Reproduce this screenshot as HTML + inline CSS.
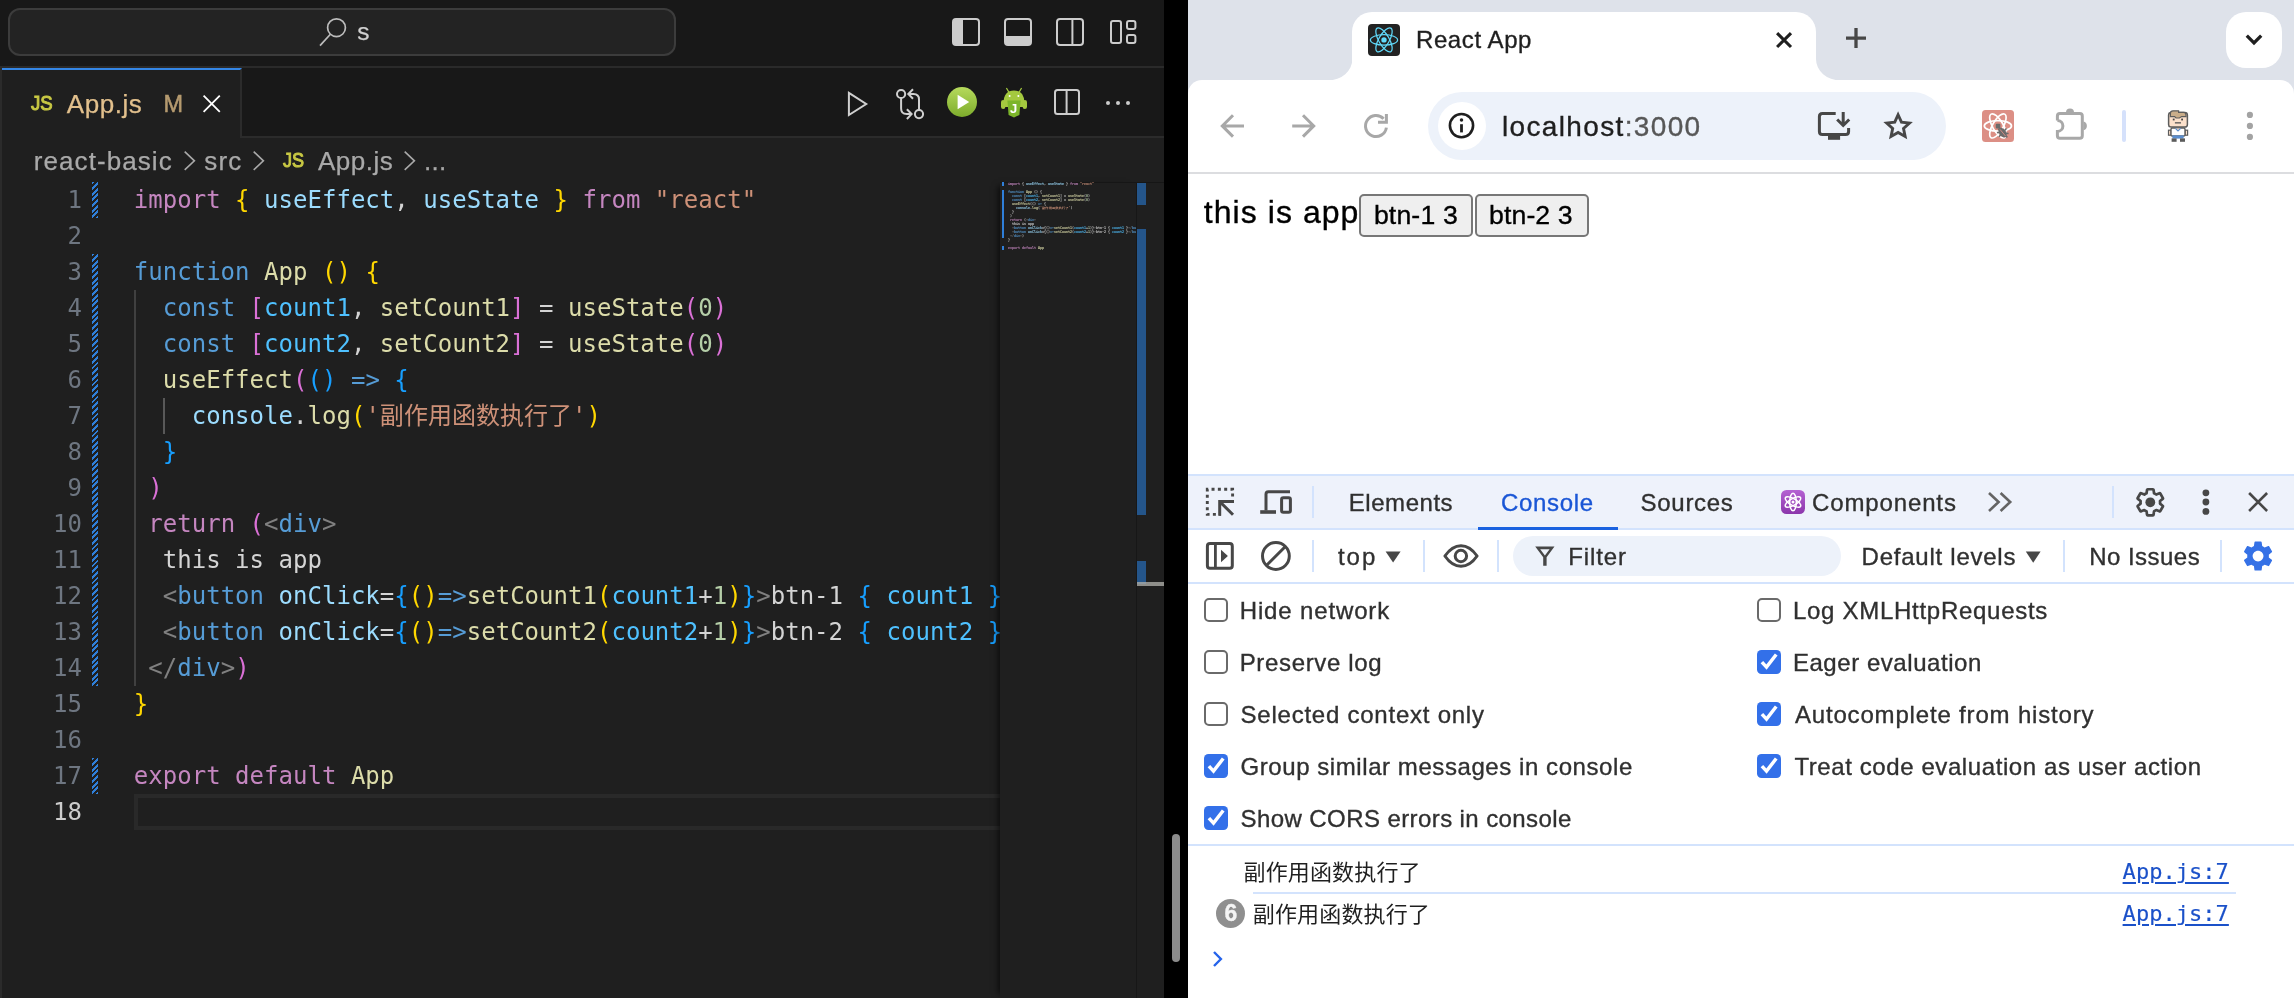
<!DOCTYPE html>
<html lang="en">
<head>
<meta charset="utf-8">
<title>React App</title>
<style>
*{box-sizing:border-box;margin:0;padding:0}
html,body{width:2294px;height:998px;overflow:hidden;background:#000}
body{position:relative;font-family:"Liberation Sans","Noto Sans CJK SC",sans-serif}
#vsc,#chr{will-change:transform}
.abs{position:absolute}
.tx{position:absolute;white-space:pre}
#chr .tx{-webkit-text-stroke:.35px}
#vsc .tx{-webkit-text-stroke:.25px}
svg{display:block;overflow:visible}

/* ============ VS CODE ============ */
#vsc{position:absolute;left:0;top:0;width:1164px;height:998px;background:#1f1f1f;overflow:hidden}
#vsc .title{position:absolute;left:0;top:0;width:1164px;height:68px;background:#181818;border-bottom:2px solid #2a2a2a}
#vsc .search{position:absolute;left:8px;top:8px;width:668px;height:48px;background:#232323;border:2px solid #3c3c3c;border-radius:12px}
#vsc .search span{position:absolute;left:347px;top:6px;font-size:26px;color:#cccccc;line-height:32px}
#vsc .tabs{position:absolute;left:0;top:68px;width:1164px;height:70px;background:#181818;border-bottom:2px solid #2b2b2b}
#vsc .tab{position:absolute;left:2px;top:0;width:240px;height:70px;background:#1f1f1f;border-top:2px solid #3486e5;border-right:2px solid #2b2b2b}
#vsc .leftedge{position:absolute;left:0;top:66px;width:2px;height:932px;background:#2b2b2b}
.jsicon{font-weight:bold;color:#cbcb41;font-size:19px;letter-spacing:-0.5px}
#vsc .crumbs{position:absolute;left:0;top:138px;height:44px;width:1000px;font-size:26px;color:#a9a9a9;line-height:44px;white-space:nowrap}
#vsc .crumbs span{position:absolute;top:0}

/* code */
#code{position:absolute;left:0;top:182px;width:1000px;height:816px;overflow:hidden;font-family:"DejaVu Sans Mono","Liberation Mono","Noto Sans CJK SC",monospace;font-size:24px;line-height:36px;color:#d4d4d4;white-space:pre}
#code .ln{position:absolute;left:0;width:82px;text-align:right;color:#6e7681;height:36px}
#code .ln.act{color:#cccccc}
#code .l{position:absolute;left:133.8px;height:36px;letter-spacing:.02px}
.kw{color:#c586c0}.kb{color:#569cd6}.v{color:#9cdcfe}.f{color:#dcdcaa}.s{color:#ce9178}.n{color:#b5cea8}.c{color:#4fc1ff}
.b1{color:#ffd700}.b2{color:#da70d6}.b3{color:#179fff}.t{color:#808080}
.cjk{font-family:"Noto Sans CJK SC",sans-serif;line-height:0}
.gut{position:absolute;left:92px;width:6px;background:repeating-linear-gradient(135deg,#2f7fd9 0 2px,transparent 2px 4px)}
.guide{position:absolute;width:2px;background:#404040}
#curline{position:absolute;left:134px;top:612px;width:890px;height:36px;border:4px solid #292929}

/* minimap */
#mini{position:absolute;left:1000px;top:182px;width:136px;height:816px;background:#1f1f1f;overflow:hidden;box-shadow:-6px 0 6px -4px rgba(0,0,0,.6)}
#ruler{position:absolute;left:1136px;top:182px;width:28px;height:816px;background:#1f1f1f;border-left:1px solid #171717}
#minitext{position:absolute;left:8px;top:0;transform-origin:0 0;transform:scale(0.1384,0.1111);font-family:"DejaVu Sans Mono","Liberation Mono","Noto Sans CJK SC",monospace;font-size:24px;line-height:36px;color:#d4d4d4;font-weight:bold;opacity:.9}
#minitext .ml{height:36px;white-space:pre}
</style>
</head>

<body>


<!-- ================= VS CODE ================= -->
<div id="vsc">
  <div class="title">
    <div class="search"></div>
  </div>

  <!-- title bar layout icons -->
  <svg class="abs" style="left:952px;top:18px" width="28" height="28" viewBox="0 0 28 28"><rect x="1" y="1" width="26" height="26" rx="3" fill="none" stroke="#cccccc" stroke-width="2"/><path d="M1 4 Q1 1 4 1 H11 V27 H4 Q1 27 1 24 Z" fill="#cccccc"/></svg>
  <svg class="abs" style="left:1004px;top:18px" width="28" height="28" viewBox="0 0 28 28"><rect x="1" y="1" width="26" height="26" rx="3" fill="none" stroke="#cccccc" stroke-width="2"/><path d="M1 18 H27 V24 Q27 27 24 27 H4 Q1 27 1 24 Z" fill="#cccccc"/></svg>
  <svg class="abs" style="left:1056px;top:18px" width="28" height="28" viewBox="0 0 28 28"><rect x="1" y="1" width="26" height="26" rx="3" fill="none" stroke="#cccccc" stroke-width="2"/><path d="M16.4 1 V27" stroke="#cccccc" stroke-width="2"/></svg>
  <svg class="abs" style="left:1110px;top:20px" width="27" height="24" viewBox="0 0 27 24"><rect x="1" y="1" width="10" height="22" rx="2" fill="none" stroke="#cccccc" stroke-width="2"/><rect x="17" y="1" width="8.4" height="8" rx="2" fill="none" stroke="#cccccc" stroke-width="2"/><rect x="17" y="15" width="8.4" height="8" rx="2" fill="none" stroke="#cccccc" stroke-width="2"/></svg>
  <div class="tabs">
    <div class="tab"></div>
  </div>

  <!-- editor actions -->
  <svg class="abs" style="left:846px;top:88px" width="24" height="32" viewBox="0 0 24 32"><path d="M2.9 4.9 L20.2 16 L2.9 27 Z" fill="none" stroke="#d0d0d0" stroke-width="2" stroke-linejoin="miter"/></svg>
  <svg class="abs" style="left:895px;top:88px" width="30" height="32" viewBox="0 0 30 32"><circle cx="6.1" cy="6" r="4.1" fill="none" stroke="#d0d0d0" stroke-width="2"/><circle cx="24" cy="26.1" r="4.1" fill="none" stroke="#d0d0d0" stroke-width="2"/><path d="M6.1 10.1 V20.6 Q6.1 26.1 11.6 26.1 H16 M11.9 21.2 L16.6 26.1 L11.9 31" fill="none" stroke="#d0d0d0" stroke-width="2"/><path d="M24 22 V11.5 Q24 6 18.5 6 H14 M18 1.3 L13.3 6 L18 10.8" fill="none" stroke="#d0d0d0" stroke-width="2"/></svg>
  <div class="abs" style="left:946.8px;top:87px;width:30px;height:30px;border-radius:15px;background:linear-gradient(#b6da5c,#7dac2c)"></div><svg class="abs" style="left:946px;top:86px" width="32" height="32" viewBox="0 0 32 32"><path d="M11.6 8.8 L23.2 16 L11.6 23.2 Z" fill="#ffffff"/></svg>
  <svg class="abs" style="left:1000px;top:86px" width="28" height="34" viewBox="0 0 28 34"><path d="M6.4 2 L9 6.4 M21.6 2 L19 6.4" stroke="#a4c93f" stroke-width="1.2"/><path d="M3.6 17 Q3.6 4.4 14 4.4 Q24.4 4.4 24.4 17 V21 H3.6 Z" fill="#a4c93f"/><rect x="1" y="14" width="4.4" height="9" rx="2.2" fill="#a4c93f"/><rect x="22.6" y="14" width="4.4" height="9" rx="2.2" fill="#a4c93f"/><circle cx="9.6" cy="10" r="1" fill="#fff"/><circle cx="18.4" cy="10" r="1" fill="#fff"/><path d="M7.4 14.6 H20.6 L19.4 29 L14 31.4 L8.6 29 Z" fill="#7cb52a"/><text x="10" y="27" font-family="Liberation Sans,sans-serif" font-weight="bold" font-size="13" fill="#ffffff">J</text></svg>
  <svg class="abs" style="left:1054px;top:89px" width="26" height="26" viewBox="0 0 26 26"><rect x="1" y="1" width="24" height="24" rx="2.5" fill="none" stroke="#cccccc" stroke-width="2"/><path d="M12.6 1 V25" stroke="#cccccc" stroke-width="2"/></svg>
  <div class="abs" style="left:1105.6px;top:100.8px;width:4.6px;height:4.6px;border-radius:3px;background:#cccccc"></div>
  <div class="abs" style="left:1115.7px;top:100.8px;width:4.6px;height:4.6px;border-radius:3px;background:#cccccc"></div>
  <div class="abs" style="left:1125.8px;top:100.8px;width:4.6px;height:4.6px;border-radius:3px;background:#cccccc"></div>
  <div class="leftedge"></div>
  <svg class="abs" style="left:318px;top:16px" width="30" height="32" viewBox="0 0 30 32"><circle cx="18.5" cy="11.7" r="8.9" fill="none" stroke="#bdbdbd" stroke-width="1.7"/><path d="M12.4 18.2 L2 29.6" stroke="#bdbdbd" stroke-width="1.7" fill="none"/></svg>
<span class="tx" style="left:357.2px;top:20.3px;font-size:24.5px;line-height:24.5px;letter-spacing:0.00px;color:#d0d0d0;">s</span>
<span class="tx" style="left:30.9px;top:92.3px;font-size:21px;line-height:21px;letter-spacing:0.00px;color:#c9c944;-webkit-text-stroke:1px;transform:scaleX(0.885);transform-origin:0 0;">JS</span>
<span class="tx" style="left:66.8px;top:90.6px;font-size:26px;line-height:26px;letter-spacing:0.53px;color:#e2c08d;">App.js</span>
<span class="tx" style="left:163.4px;top:92.6px;font-size:23.5px;line-height:23.5px;letter-spacing:0.00px;color:#b59a6f;-webkit-text-stroke:.5px;">M</span>
<svg class="abs" style="left:203.3px;top:94.5px" width="17.4" height="17.4" viewBox="0 0 17.4 17.4"><path d="M0.6 0.6 L16.8 16.8 M16.8 0.6 L0.6 16.8" stroke="#ffffff" stroke-width="1.8" fill="none"/></svg>
<span class="tx" style="left:33.8px;top:148.1px;font-size:26px;line-height:26px;letter-spacing:1.07px;color:#a9a9a9;">react-basic</span>
<svg class="abs" style="left:183.6px;top:150.5px" width="11.4" height="19.6" viewBox="0 0 11.4 19.6"><path d="M0.7 0.7 L10.4 9.8 L0.7 18.9" fill="none" stroke="#a9a9a9" stroke-width="1.6"/></svg>
<span class="tx" style="left:204.3px;top:148.1px;font-size:26px;line-height:26px;letter-spacing:1.18px;color:#a9a9a9;">src</span>
<svg class="abs" style="left:253px;top:150.5px" width="11.4" height="19.6" viewBox="0 0 11.4 19.6"><path d="M0.7 0.7 L10.4 9.8 L0.7 18.9" fill="none" stroke="#a9a9a9" stroke-width="1.6"/></svg>
<span class="tx" style="left:282.6px;top:149.3px;font-size:21px;line-height:21px;letter-spacing:0.00px;color:#c9c944;-webkit-text-stroke:1px;transform:scaleX(0.859);transform-origin:0 0;">JS</span>
<span class="tx" style="left:317.9px;top:148.1px;font-size:26px;line-height:26px;letter-spacing:0.53px;color:#a9a9a9;">App.js</span>
<svg class="abs" style="left:404.4px;top:150.5px" width="11.4" height="19.6" viewBox="0 0 11.4 19.6"><path d="M0.7 0.7 L10.4 9.8 L0.7 18.9" fill="none" stroke="#a9a9a9" stroke-width="1.6"/></svg>
<span class="tx" style="left:424.1px;top:148.1px;font-size:26px;line-height:26px;letter-spacing:0.29px;color:#a9a9a9;">...</span>
  <div id="code">
<div class="gut" style="top:0px;height:36px"></div>
<div class="gut" style="top:72px;height:432px"></div>
<div class="gut" style="top:576px;height:36px"></div>
<div class="guide" style="left:134px;top:108px;height:396px"></div>
<div class="guide" style="left:163px;background:#585858;top:216px;height:36px"></div>
<div id="curline"></div>
<div class="ln" style="top:0px">1</div>
<div class="l" style="top:0px"><span class="kw">import</span> <span class="b1">{</span> <span class="v">useEffect</span>, <span class="v">useState</span> <span class="b1">}</span> <span class="kw">from</span> <span class="s">"react"</span></div>
<div class="ln" style="top:36px">2</div>
<div class="ln" style="top:72px">3</div>
<div class="l" style="top:72px"><span class="kb">function</span> <span class="f">App</span> <span class="b1">()</span> <span class="b1">{</span></div>
<div class="ln" style="top:108px">4</div>
<div class="l" style="top:108px">  <span class="kb">const</span> <span class="b2">[</span><span class="c">count1</span>, <span class="f">setCount1</span><span class="b2">]</span> = <span class="f">useState</span><span class="b2">(</span><span class="n">0</span><span class="b2">)</span></div>
<div class="ln" style="top:144px">5</div>
<div class="l" style="top:144px">  <span class="kb">const</span> <span class="b2">[</span><span class="c">count2</span>, <span class="f">setCount2</span><span class="b2">]</span> = <span class="f">useState</span><span class="b2">(</span><span class="n">0</span><span class="b2">)</span></div>
<div class="ln" style="top:180px">6</div>
<div class="l" style="top:180px">  <span class="f">useEffect</span><span class="b2">(</span><span class="b3">()</span> <span class="kb">=&gt;</span> <span class="b3">{</span></div>
<div class="ln" style="top:216px">7</div>
<div class="l" style="top:216px">    <span class="v">console</span>.<span class="f">log</span><span class="b1">(</span><span class="s">'</span><span class="s cjk">副作用函数执行了</span><span class="s">'</span><span class="b1">)</span></div>
<div class="ln" style="top:252px">8</div>
<div class="l" style="top:252px">  <span class="b3">}</span></div>
<div class="ln" style="top:288px">9</div>
<div class="l" style="top:288px"> <span class="b2">)</span></div>
<div class="ln" style="top:324px">10</div>
<div class="l" style="top:324px"> <span class="kw">return</span> <span class="b2">(</span><span class="t">&lt;</span><span class="kb">div</span><span class="t">&gt;</span></div>
<div class="ln" style="top:360px">11</div>
<div class="l" style="top:360px">  this is app</div>
<div class="ln" style="top:396px">12</div>
<div class="l" style="top:396px">  <span class="t">&lt;</span><span class="kb">button</span> <span class="v">onClick</span>=<span class="b3">{</span><span class="b1">()</span><span class="kb">=&gt;</span><span class="f">setCount1</span><span class="b1">(</span><span class="c">count1</span>+<span class="n">1</span><span class="b1">)</span><span class="b3">}</span><span class="t">&gt;</span>btn-1 <span class="b3">{</span> <span class="c">count1</span> <span class="b3">}</span><span class="t">&lt;/</span><span class="kb">button</span><span class="t">&gt;</span></div>
<div class="ln" style="top:432px">13</div>
<div class="l" style="top:432px">  <span class="t">&lt;</span><span class="kb">button</span> <span class="v">onClick</span>=<span class="b3">{</span><span class="b1">()</span><span class="kb">=&gt;</span><span class="f">setCount2</span><span class="b1">(</span><span class="c">count2</span>+<span class="n">1</span><span class="b1">)</span><span class="b3">}</span><span class="t">&gt;</span>btn-2 <span class="b3">{</span> <span class="c">count2</span> <span class="b3">}</span><span class="t">&lt;/</span><span class="kb">button</span><span class="t">&gt;</span></div>
<div class="ln" style="top:468px">14</div>
<div class="l" style="top:468px"> <span class="t">&lt;/</span><span class="kb">div</span><span class="t">&gt;</span><span class="b2">)</span></div>
<div class="ln" style="top:504px">15</div>
<div class="l" style="top:504px"><span class="b1">}</span></div>
<div class="ln" style="top:540px">16</div>
<div class="ln" style="top:576px">17</div>
<div class="l" style="top:576px"><span class="kw">export</span> <span class="kw">default</span> <span class="f">App</span></div>
<div class="ln act" style="top:612px">18</div>
</div>
  <div id="mini"><div class="abs" style="left:0;top:0;width:136px;height:1px;background:#161616"></div><div class="abs" style="left:1.8px;top:0;width:2.4px;height:4px;background:#2f7fd9"></div><div class="abs" style="left:1.8px;top:8px;width:2.4px;height:48px;background:#2f7fd9"></div><div class="abs" style="left:1.8px;top:64px;width:2.4px;height:4px;background:#2f7fd9"></div><div id="minitext">
<div class="ml"><span class="kw">import</span> { <span class="v">useEffect</span>, <span class="v">useState</span> } <span class="kw">from</span> <span class="s">"react"</span></div>
<div class="ml"> </div>
<div class="ml"><span class="kb">function</span> <span class="f">App</span> () {</div>
<div class="ml">  <span class="kb">const</span> [<span class="c">count1</span>, <span class="f">setCount1</span>] = <span class="f">useState</span>(<span class="n">0</span>)</div>
<div class="ml">  <span class="kb">const</span> [<span class="c">count2</span>, <span class="f">setCount2</span>] = <span class="f">useState</span>(<span class="n">0</span>)</div>
<div class="ml">  <span class="f">useEffect</span>(() <span class="kb">=&gt;</span> {</div>
<div class="ml">    <span class="v">console</span>.<span class="f">log</span>(<span class="s">'</span><span class="s cjk">副作用函数执行了</span><span class="s">'</span>)</div>
<div class="ml">  }</div>
<div class="ml"> )</div>
<div class="ml"> <span class="kw">return</span> (<span class="t">&lt;</span><span class="kb">div</span><span class="t">&gt;</span></div>
<div class="ml">  this is app</div>
<div class="ml">  <span class="t">&lt;</span><span class="kb">button</span> <span class="v">onClick</span>={()<span class="kb">=&gt;</span><span class="f">setCount1</span>(<span class="c">count1</span>+<span class="n">1</span>)}<span class="t">&gt;</span>btn-1 { <span class="c">count1</span> }<span class="t">&lt;/</span><span class="kb">button</span><span class="t">&gt;</span></div>
<div class="ml">  <span class="t">&lt;</span><span class="kb">button</span> <span class="v">onClick</span>={()<span class="kb">=&gt;</span><span class="f">setCount2</span>(<span class="c">count2</span>+<span class="n">1</span>)}<span class="t">&gt;</span>btn-2 { <span class="c">count2</span> }<span class="t">&lt;/</span><span class="kb">button</span><span class="t">&gt;</span></div>
<div class="ml"> <span class="t">&lt;/</span><span class="kb">div</span><span class="t">&gt;</span>)</div>
<div class="ml">}</div>
<div class="ml"> </div>
<div class="ml"><span class="kw">export</span> <span class="kw">default</span> <span class="f">App</span></div>
<div class="ml"> </div>
</div></div>
  <div id="ruler"><div class="abs" style="left:0;top:0;width:28px;height:1px;background:#161616"></div>
    <div class="abs" style="left:0px;top:1px;width:9.4px;height:22px;background:#24558a"></div>
    <div class="abs" style="left:0px;top:47px;width:9.4px;height:286px;background:#24558a"></div>
    <div class="abs" style="left:0px;top:379px;width:9.4px;height:23px;background:#24558a"></div>
    <div class="abs" style="left:0;top:400px;width:28px;height:4px;background:rgba(170,170,165,.8)"></div>
  </div>
</div>
<!-- window scrollbar in black gap -->
<div class="abs" style="left:1172px;top:834px;width:8px;height:128px;border-radius:4px;background:#8c8c8c"></div>

<!-- ================= CHROME ================= -->
<div id="chr" style="position:absolute;left:0;top:0;width:2294px;height:998px">
<div class="abs" style="left:1188px;top:0;width:1106px;height:998px;background:#fff"></div>
<div class="abs" style="left:1188px;top:0;width:1106px;height:96px;background:#dee2ea"></div>
<div class="abs" style="left:1188px;top:80px;width:1106px;height:92px;background:#fff;border-radius:14px 14px 0 0"></div>
<div class="abs" style="left:1188px;top:172px;width:1106px;height:2px;background:#dcdde0"></div>
<div class="abs" style="left:1352px;top:12px;width:464px;height:70px;background:#fff;border-radius:20px 20px 0 0"></div>
<svg class="abs" style="left:1327.6px;top:58.6px" width="24.4" height="21.4" viewBox="0 0 24.4 21.4"><path d="M24.4 0 V21.4 H0 A24.4 21.4 0 0 0 24.4 0Z" fill="#fff"/></svg>
<svg class="abs" style="left:1816px;top:58.6px" width="24.4" height="21.4" viewBox="0 0 24.4 21.4"><path d="M0 0 V21.4 H24.4 A24.4 21.4 0 0 1 0 0Z" fill="#fff"/></svg>
<div class="abs" style="left:1368px;top:24px;width:32px;height:32px;border-radius:4px;background:#222"></div>
<svg class="abs" style="left:1368px;top:24px" width="32" height="32" viewBox="0 0 32 32"><ellipse cx="16" cy="15.9" rx="13.6" ry="5.2" fill="none" stroke="#61dafb" stroke-width="1.25" transform="rotate(0 16 15.9)"/><ellipse cx="16" cy="15.9" rx="13.6" ry="5.2" fill="none" stroke="#61dafb" stroke-width="1.25" transform="rotate(60 16 15.9)"/><ellipse cx="16" cy="15.9" rx="13.6" ry="5.2" fill="none" stroke="#61dafb" stroke-width="1.25" transform="rotate(120 16 15.9)"/><circle cx="16" cy="15.9" r="2.7" fill="#61dafb"/></svg>
<span class="tx" style="left:1416.0px;top:28.1px;font-size:24px;line-height:24px;letter-spacing:0.59px;color:#1f1f1f;">React App</span>
<svg class="abs" style="left:1776px;top:32px" width="16" height="16" viewBox="0 0 16 16"><path d="M1.1 1.1 L15 15 M15 1.1 L1.1 15" stroke="#1f1f1f" stroke-width="3.1" fill="none"/></svg>
<svg class="abs" style="left:1846px;top:28px" width="20" height="20" viewBox="0 0 20 20"><path d="M10 0.1 V20 M0 10.1 H20" stroke="#474747" stroke-width="3.3" fill="none"/></svg>
<div class="abs" style="left:2226px;top:12px;width:56px;height:56px;border-radius:20px;background:#fff"></div>
<svg class="abs" style="left:2244px;top:33px" width="20" height="14" viewBox="0 0 20 14"><path d="M2.8 2.6 L10 9.8 L17.2 2.6" stroke="#1f1f1f" stroke-width="3.3" fill="none"/></svg>
<div class="abs" style="left:1428px;top:92px;width:518px;height:68px;border-radius:34px;background:#edf2fa"></div>
<div class="abs" style="left:1437.5px;top:101.5px;width:48px;height:48px;border-radius:24px;background:#fff"></div>
<span class="tx" style="left:1502.0px;top:113.3px;font-size:28px;line-height:28px;letter-spacing:1.35px;color:#1f1f1f;">localhost<span style="color:#575757">:3000</span></span>
<svg class="abs" style="left:1188px;top:80px" width="1106" height="92" viewBox="1188 80 1106 92"><path d="M1244 125.9 H1222.6 M1233 115.2 L1222.3 125.9 L1233 136.6" fill="none" stroke="#a8a8a8" stroke-width="3"/><path d="M1292.2 125.9 H1313.4 M1303 115.2 L1313.7 125.9 L1303 136.6" fill="none" stroke="#a8a8a8" stroke-width="3"/><path d="M1386.4 127.6 A10.5 10.5 0 1 1 1383.6 118.8" fill="none" stroke="#a8a8a8" stroke-width="3"/><path d="M1386.4 114 V122.3 M1387.9 122.3 H1378" fill="none" stroke="#a8a8a8" stroke-width="3"/><circle cx="1461.5" cy="125.6" r="11.6" fill="none" stroke="#1f1f1f" stroke-width="2.6"/><path d="M1461.5 124.2 V132.4" stroke="#1f1f1f" stroke-width="2.8"/><circle cx="1461.5" cy="120" r="1.75" fill="#1f1f1f"/><path d="M1835.7 113.5 H1822.4 Q1819.4 113.5 1819.4 116.5 V131.4 Q1819.4 134.4 1822.4 134.4 H1845.6 Q1848.6 134.4 1848.6 131.4 V128" fill="none" stroke="#474747" stroke-width="3"/><rect x="1828" y="135.6" width="12.1" height="4.2" fill="#474747"/><path d="M1843.2 112 V125 M1837.2 119.5 L1843.2 125.5 L1849.2 119.5" fill="none" stroke="#474747" stroke-width="3"/><polygon points="1898.10,114.74 1901.45,122.13 1909.51,123.03 1903.52,128.50 1905.15,136.45 1898.10,132.44 1891.05,136.45 1892.68,128.50 1886.69,123.03 1894.75,122.13" fill="none" stroke="#474747" stroke-width="2.9" stroke-linejoin="miter" stroke-miterlimit="10"/><rect x="1982" y="110" width="32" height="32" rx="3.5" fill="#dc8f85"/><ellipse cx="1997.9" cy="125.9" rx="13.6" ry="5.3" fill="none" stroke="#ffffff" stroke-width="1.7" transform="rotate(0 1997.9 125.9)"/><ellipse cx="1997.9" cy="125.9" rx="13.6" ry="5.3" fill="none" stroke="#ffffff" stroke-width="1.7" transform="rotate(60 1997.9 125.9)"/><ellipse cx="1997.9" cy="125.9" rx="13.6" ry="5.3" fill="none" stroke="#ffffff" stroke-width="1.7" transform="rotate(120 1997.9 125.9)"/><circle cx="1997.9" cy="125.9" r="0" fill="#ffffff"/><rect x="1995.8" y="123.8" width="4.6" height="4.6" rx="1" fill="#6b6b6b"/><ellipse cx="2002.6" cy="132.6" rx="3.3" ry="5.6" fill="#6b6b6b" transform="rotate(-38 2002.6 132.6)"/><path d="M1997 132.5 L2008.6 133.4 M1999 136.8 L2006.4 128.4 M1998.4 128.8 L2007.4 137.4" stroke="#6b6b6b" stroke-width="1.5"/><path d="M2000 129.4 L2005.6 136.2" stroke="#dc8f85" stroke-width="0.9"/><path d="M2057.4 120.4 V116 Q2057.4 113.5 2059.9 113.5 H2079.8 Q2082.3 113.5 2082.3 116 V135.8 Q2082.3 138.3 2079.8 138.3 H2059.9 Q2057.4 138.3 2057.4 135.8 V131.4 A5.5 5.5 0 0 0 2057.4 120.4" fill="none" stroke="#a8a8a8" stroke-width="3"/><path d="M2066 112.6 A4 4 0 0 1 2074 112.6 Z" fill="#a8a8a8"/><path d="M2083.4 121.6 A4.4 4.4 0 0 1 2083.4 130.2 Z" fill="#a8a8a8"/><rect x="2122" y="110" width="4" height="32" rx="2" fill="#d5e1fb"/><rect x="2168.6" y="112.4" width="18.8" height="14.6" rx="2.6" fill="#fbe0cb" stroke="#5c5c5c" stroke-width="1.5"/><path d="M2170.4 116.6 V113.2 Q2170.4 110.8 2173 110.8 H2178.6 V112.4 H2183.6 Q2186 112.4 2186 115 V116.6 H2181.6 L2179.4 118 H2176 L2174.6 116.6 Z" fill="#c9ad8a" stroke="#5c5c5c" stroke-width="1.2"/><rect x="2172.8" y="118.6" width="1.8" height="1.8" fill="#444"/><rect x="2181.2" y="118.6" width="1.8" height="1.8" fill="#444"/><rect x="2174.9" y="122.2" width="6.1" height="1.3" fill="#555"/><rect x="2168.5" y="130.2" width="2.6" height="5" fill="#fbe0cb" stroke="#5c5c5c" stroke-width="1.2"/><rect x="2185" y="130.2" width="2.6" height="5" fill="#fbe0cb" stroke="#5c5c5c" stroke-width="1.2"/><rect x="2171" y="128" width="14" height="8" rx="1.2" fill="#ffffff" stroke="#5c5c5c" stroke-width="1.4"/><path d="M2175.4 128.4 L2178 131 L2180.6 128.4" fill="#fbe0cb" stroke="#5a8ed0" stroke-width="1.2"/><rect x="2172.4" y="135.4" width="11.2" height="3.2" fill="#5a8ed0"/><rect x="2171.6" y="138.4" width="5" height="3.4" fill="#5c5c5c"/><rect x="2180" y="138.4" width="5" height="3.4" fill="#5c5c5c"/><circle cx="2249.9" cy="114.9" r="3.1" fill="#a3a3a3"/><circle cx="2249.9" cy="125.9" r="3.1" fill="#a3a3a3"/><circle cx="2249.9" cy="136.9" r="3.1" fill="#a3a3a3"/></svg>
<span class="tx" style="left:1203.8px;top:195.9px;font-size:32px;line-height:32px;letter-spacing:1.05px;color:#000;">this is app</span>
<div class="abs" style="left:1359.3px;top:194px;width:113.8px;height:42.8px;border-radius:5px;background:#efefef;border:2px solid #777"></div>
<span class="tx" style="left:1373.9px;top:201.8px;font-size:26.67px;line-height:26.67px;letter-spacing:0.14px;color:#000;">btn-1 3</span>
<div class="abs" style="left:1474.8px;top:194px;width:114.1px;height:42.8px;border-radius:5px;background:#efefef;border:2px solid #777"></div>
<span class="tx" style="left:1489.1px;top:201.8px;font-size:26.67px;line-height:26.67px;letter-spacing:0.08px;color:#000;">btn-2 3</span>
<div class="abs" style="left:1188px;top:474px;width:1106px;height:2px;background:#d3e3fd"></div>
<div class="abs" style="left:1188px;top:476px;width:1106px;height:52px;background:#eef2fb"></div>
<div class="abs" style="left:1188px;top:528px;width:1106px;height:2px;background:#d3e3fd"></div>
<div class="abs" style="left:1188px;top:582px;width:1106px;height:2px;background:#d3e3fd"></div>
<div class="abs" style="left:1188px;top:844px;width:1106px;height:2px;background:#d3e3fd"></div>
<div class="abs" style="left:1253px;top:892px;width:983px;height:2px;background:#d3e3fd"></div>
<div class="abs" style="left:1478px;top:527px;width:140px;height:3px;background:#1a62e0"></div>
<div class="abs" style="left:1312px;top:486px;width:2px;height:32px;background:#d3e3fd"></div>
<span class="tx" style="left:1348.8px;top:490.7px;font-size:24px;line-height:24px;letter-spacing:0.54px;color:#303030;">Elements</span>
<span class="tx" style="left:1501.0px;top:490.7px;font-size:24px;line-height:24px;letter-spacing:0.67px;color:#1a56d6;">Console</span>
<span class="tx" style="left:1640.6px;top:490.7px;font-size:24px;line-height:24px;letter-spacing:0.70px;color:#303030;">Sources</span>
<div class="abs" style="left:1781px;top:490px;width:24px;height:24px;border-radius:5.5px;background:linear-gradient(#b562d3,#8b36ab)"></div>
<svg class="abs" style="left:1781px;top:490px" width="24" height="24" viewBox="0 0 24 24"><g transform="rotate(90 12 12)"><ellipse cx="12" cy="12" rx="8.8" ry="3.3" fill="none" stroke="#fff" stroke-width="1.5" transform="rotate(0 12 12)"/><ellipse cx="12" cy="12" rx="8.8" ry="3.3" fill="none" stroke="#fff" stroke-width="1.5" transform="rotate(60 12 12)"/><ellipse cx="12" cy="12" rx="8.8" ry="3.3" fill="none" stroke="#fff" stroke-width="1.5" transform="rotate(120 12 12)"/><circle cx="12" cy="12" r="0" fill="#fff"/></g><circle cx="12" cy="12" r="1.5" fill="#fff"/></svg>
<span class="tx" style="left:1812.0px;top:490.7px;font-size:24px;line-height:24px;letter-spacing:0.87px;color:#303030;">Components</span>
<div class="abs" style="left:2112px;top:486px;width:2px;height:32px;background:#d3e3fd"></div>
<svg class="abs" style="left:2133.8px;top:485.7px" width="32.6" height="32.6" viewBox="0 0 24 24"><path d="M19.14 12.94c.04-.3.06-.61.06-.94 0-.32-.02-.64-.07-.94l2.03-1.58c.18-.14.23-.41.12-.61l-1.92-3.32c-.12-.22-.37-.29-.59-.22l-2.39.96c-.5-.38-1.03-.7-1.62-.94l-.36-2.54c-.04-.24-.24-.41-.48-.41h-3.84c-.24 0-.43.17-.47.41l-.36 2.54c-.59.24-1.13.57-1.62.94l-2.39-.96c-.22-.08-.47 0-.59.22L2.74 8.87c-.12.21-.08.47.12.61l2.03 1.58c-.05.3-.09.63-.09.94s.02.64.07.94l-2.03 1.58c-.18.14-.23.41-.12.61l1.92 3.32c.12.22.37.29.59.22l2.39-.96c.5.38 1.03.7 1.62.94l.36 2.54c.05.24.24.41.48.41h3.84c.24 0 .44-.17.47-.41l.36-2.54c.59-.24 1.13-.56 1.62-.94l2.39.96c.22.08.47 0 .59-.22l1.92-3.32c.12-.22.07-.47-.12-.61l-2.01-1.58z" fill="none" stroke="#474747" stroke-width="2" stroke-linejoin="round"/><circle cx="12" cy="12" r="3.6" fill="#474747"/></svg>
<div class="abs" style="left:1312px;top:540px;width:2px;height:32px;background:#d3e3fd"></div>
<span class="tx" style="left:1338.0px;top:544.7px;font-size:24px;line-height:24px;letter-spacing:1.95px;color:#303030;">top</span>
<div class="abs" style="left:1423px;top:540px;width:2px;height:32px;background:#d3e3fd"></div>
<div class="abs" style="left:1497px;top:540px;width:2px;height:32px;background:#d3e3fd"></div>
<div class="abs" style="left:1513px;top:536.3px;width:328px;height:39.4px;border-radius:20px;background:#edf2fa"></div>
<span class="tx" style="left:1568.3px;top:544.7px;font-size:24px;line-height:24px;letter-spacing:0.85px;color:#303030;">Filter</span>
<span class="tx" style="left:1861.6px;top:545.2px;font-size:24px;line-height:24px;letter-spacing:0.75px;color:#303030;">Default levels</span>
<div class="abs" style="left:2063px;top:540px;width:2px;height:32px;background:#d3e3fd"></div>
<span class="tx" style="left:2089.2px;top:545.2px;font-size:24px;line-height:24px;letter-spacing:0.47px;color:#303030;">No Issues</span>
<div class="abs" style="left:2220px;top:540px;width:2px;height:32px;background:#d3e3fd"></div>
<svg class="abs" style="left:2240.04px;top:538.14px" width="36.12" height="36.12" viewBox="0 0 24 24"><path d="M19.14 12.94c.04-.3.06-.61.06-.94 0-.32-.02-.64-.07-.94l2.03-1.58c.18-.14.23-.41.12-.61l-1.92-3.32c-.12-.22-.37-.29-.59-.22l-2.39.96c-.5-.38-1.03-.7-1.62-.94l-.36-2.54c-.04-.24-.24-.41-.48-.41h-3.84c-.24 0-.43.17-.47.41l-.36 2.54c-.59.24-1.13.57-1.62.94l-2.39-.96c-.22-.08-.47 0-.59.22L2.74 8.87c-.12.21-.08.47.12.61l2.03 1.58c-.05.3-.09.63-.09.94s.02.64.07.94l-2.03 1.58c-.18.14-.23.41-.12.61l1.92 3.32c.12.22.37.29.59.22l2.39-.96c.5.38 1.03.7 1.62.94l.36 2.54c.05.24.24.41.48.41h3.84c.24 0 .44-.17.47-.41l.36-2.54c.59-.24 1.13-.56 1.62-.94l2.39.96c.22.08.47 0 .59-.22l1.92-3.32c.12-.22.07-.47-.12-.61l-2.01-1.58zM12 15.6c-1.98 0-3.6-1.62-3.6-3.6s1.62-3.6 3.6-3.6 3.6 1.62 3.6 3.6-1.62 3.6-3.6 3.6z" fill="#3571e6" fill-rule="evenodd"/></svg>
<svg class="abs" style="left:1188px;top:476px" width="1106" height="108" viewBox="1188 476 1106 108"><path d="M1221 514.4 H1207.3 V489.3 H1232.6 V499.6" fill="none" stroke="#474747" stroke-width="2.9" stroke-dasharray="3 3.32" stroke-dashoffset="1.2"/><path d="M1234 501.5 H1219.7 V515.8 M1219.7 501.5 L1233 514.8" fill="none" stroke="#474747" stroke-width="3"/><path d="M1290 491.8 H1268.4 Q1266 491.8 1266 494.2 V510.6" fill="none" stroke="#474747" stroke-width="3"/><rect x="1260.2" y="510.2" width="15.8" height="3.6" fill="#474747"/><rect x="1281.6" y="497.7" width="8.8" height="14.6" rx="1.8" fill="none" stroke="#474747" stroke-width="3"/><path d="M1989 493 L1998.6 502 L1989 511 M2000.6 493 L2010.2 502 L2000.6 511" fill="none" stroke="#646464" stroke-width="2.6"/><circle cx="2205.9" cy="492.8" r="3.4" fill="#474747"/><circle cx="2205.9" cy="502" r="3.4" fill="#474747"/><circle cx="2205.9" cy="511.4" r="3.4" fill="#474747"/><path d="M2249.1 493 L2267.1 511 M2267.1 493 L2249.1 511" fill="none" stroke="#474747" stroke-width="2.6"/><rect x="1207.4" y="543.6" width="24.9" height="24.7" rx="2.6" fill="none" stroke="#474747" stroke-width="3"/><path d="M1215.4 543.6 V568.3" stroke="#474747" stroke-width="2.8"/><path d="M1221 549.8 L1227.9 556 L1221 562.2 Z" fill="#474747"/><circle cx="1275.9" cy="556" r="13.4" fill="none" stroke="#474747" stroke-width="3"/><path d="M1266.4 565.5 L1285.4 546.5" stroke="#474747" stroke-width="3"/><path d="M1385.6 551.5 H1400.6 L1393.1 562.6 Z" fill="#474747"/><path d="M2025.8 551.5 H2040.6 L2033.2 562.7 Z" fill="#474747"/><path d="M1444.9 556 Q1452 545.7 1461 545.7 Q1470 545.7 1477.1 556 Q1470 566.3 1461 566.3 Q1452 566.3 1444.9 556 Z" fill="none" stroke="#474747" stroke-width="3" stroke-linejoin="round"/><circle cx="1460.9" cy="556" r="5.7" fill="none" stroke="#474747" stroke-width="3"/><path d="M1535.2 546.4 H1554.5 L1546.6 557.2 V565.7 H1543.2 V557.2 Z M1540.2 549.2 L1544.9 555.4 L1549.6 549.2 Z" fill="#474747" fill-rule="evenodd"/></svg>
<div class="abs" style="left:1204px;top:598px;width:24px;height:24px;border-radius:5px;background:#fff;border:2px solid #6a6a6a"></div>
<span class="tx" style="left:1239.7px;top:598.7px;font-size:24px;line-height:24px;letter-spacing:0.86px;color:#303030;">Hide network</span>
<div class="abs" style="left:1757px;top:598px;width:24px;height:24px;border-radius:5px;background:#fff;border:2px solid #6a6a6a"></div>
<span class="tx" style="left:1792.9px;top:598.7px;font-size:24px;line-height:24px;letter-spacing:0.72px;color:#303030;">Log XMLHttpRequests</span>
<div class="abs" style="left:1204px;top:650px;width:24px;height:24px;border-radius:5px;background:#fff;border:2px solid #6a6a6a"></div>
<span class="tx" style="left:1239.7px;top:650.7px;font-size:24px;line-height:24px;letter-spacing:0.65px;color:#303030;">Preserve log</span>
<div class="abs" style="left:1757px;top:650px;width:24px;height:24px;border-radius:4.5px;background:#3370e9"></div><svg class="abs" style="left:1757px;top:650px" width="24" height="24" viewBox="0 0 24 24"><path d="M4.9 12.1 L9.5 17.1 L19.25 4.5" fill="none" stroke="#fff" stroke-width="3.45" stroke-linecap="butt" stroke-linejoin="miter"/></svg>
<span class="tx" style="left:1792.9px;top:650.7px;font-size:24px;line-height:24px;letter-spacing:0.55px;color:#303030;">Eager evaluation</span>
<div class="abs" style="left:1204px;top:702px;width:24px;height:24px;border-radius:5px;background:#fff;border:2px solid #6a6a6a"></div>
<span class="tx" style="left:1240.6px;top:702.7px;font-size:24px;line-height:24px;letter-spacing:0.76px;color:#303030;">Selected context only</span>
<div class="abs" style="left:1757px;top:702px;width:24px;height:24px;border-radius:4.5px;background:#3370e9"></div><svg class="abs" style="left:1757px;top:702px" width="24" height="24" viewBox="0 0 24 24"><path d="M4.9 12.1 L9.5 17.1 L19.25 4.5" fill="none" stroke="#fff" stroke-width="3.45" stroke-linecap="butt" stroke-linejoin="miter"/></svg>
<span class="tx" style="left:1794.9px;top:702.7px;font-size:24px;line-height:24px;letter-spacing:0.83px;color:#303030;">Autocomplete from history</span>
<div class="abs" style="left:1204px;top:754px;width:24px;height:24px;border-radius:4.5px;background:#3370e9"></div><svg class="abs" style="left:1204px;top:754px" width="24" height="24" viewBox="0 0 24 24"><path d="M4.9 12.1 L9.5 17.1 L19.25 4.5" fill="none" stroke="#fff" stroke-width="3.45" stroke-linecap="butt" stroke-linejoin="miter"/></svg>
<span class="tx" style="left:1240.5px;top:754.7px;font-size:24px;line-height:24px;letter-spacing:0.57px;color:#303030;">Group similar messages in console</span>
<div class="abs" style="left:1757px;top:754px;width:24px;height:24px;border-radius:4.5px;background:#3370e9"></div><svg class="abs" style="left:1757px;top:754px" width="24" height="24" viewBox="0 0 24 24"><path d="M4.9 12.1 L9.5 17.1 L19.25 4.5" fill="none" stroke="#fff" stroke-width="3.45" stroke-linecap="butt" stroke-linejoin="miter"/></svg>
<span class="tx" style="left:1794.4px;top:754.7px;font-size:24px;line-height:24px;letter-spacing:0.59px;color:#303030;">Treat code evaluation as user action</span>
<div class="abs" style="left:1204px;top:806px;width:24px;height:24px;border-radius:4.5px;background:#3370e9"></div><svg class="abs" style="left:1204px;top:806px" width="24" height="24" viewBox="0 0 24 24"><path d="M4.9 12.1 L9.5 17.1 L19.25 4.5" fill="none" stroke="#fff" stroke-width="3.45" stroke-linecap="butt" stroke-linejoin="miter"/></svg>
<span class="tx" style="left:1240.6px;top:806.7px;font-size:24px;line-height:24px;letter-spacing:0.41px;color:#303030;">Show CORS errors in console</span>
<span class="tx" style="left:1243.5px;top:854px;font-size:22px;line-height:32px;letter-spacing:.15px;color:#1f1f1f;font-family:'Noto Sans CJK SC',sans-serif;-webkit-text-stroke:0;">副作用函数执行了</span>
<div class="abs" style="left:1216px;top:898.5px;width:29px;height:29px;border-radius:15px;background:#8f8f8f"></div>
<span class="tx" style="left:1224.4px;top:902.0px;font-size:23px;line-height:23px;letter-spacing:0.00px;color:#f4f4f4;font-weight:bold;">6</span>
<span class="tx" style="left:1252.8px;top:896px;font-size:22px;line-height:32px;letter-spacing:.15px;color:#1f1f1f;font-family:'Noto Sans CJK SC',sans-serif;-webkit-text-stroke:0;">副作用函数执行了</span>
<span class="tx" style="left:2122.6px;top:861.4px;font-size:22px;line-height:22px;letter-spacing:0.04px;color:#1b51c9;font-family:'DejaVu Sans Mono','Liberation Mono',monospace;-webkit-text-stroke:.15px;text-decoration:underline;text-underline-offset:2.5px;text-decoration-thickness:2px;">App.js:7</span>
<span class="tx" style="left:2122.6px;top:903.4px;font-size:22px;line-height:22px;letter-spacing:0.04px;color:#1b51c9;font-family:'DejaVu Sans Mono','Liberation Mono',monospace;-webkit-text-stroke:.15px;text-decoration:underline;text-underline-offset:2.5px;text-decoration-thickness:2px;">App.js:7</span>
<svg class="abs" style="left:1212px;top:950px" width="12" height="18" viewBox="0 0 12 18"><path d="M2 2 L8.9 9 L2 16" fill="none" stroke="#2563eb" stroke-width="2.4"/></svg>
</div>
</body>
</html>
